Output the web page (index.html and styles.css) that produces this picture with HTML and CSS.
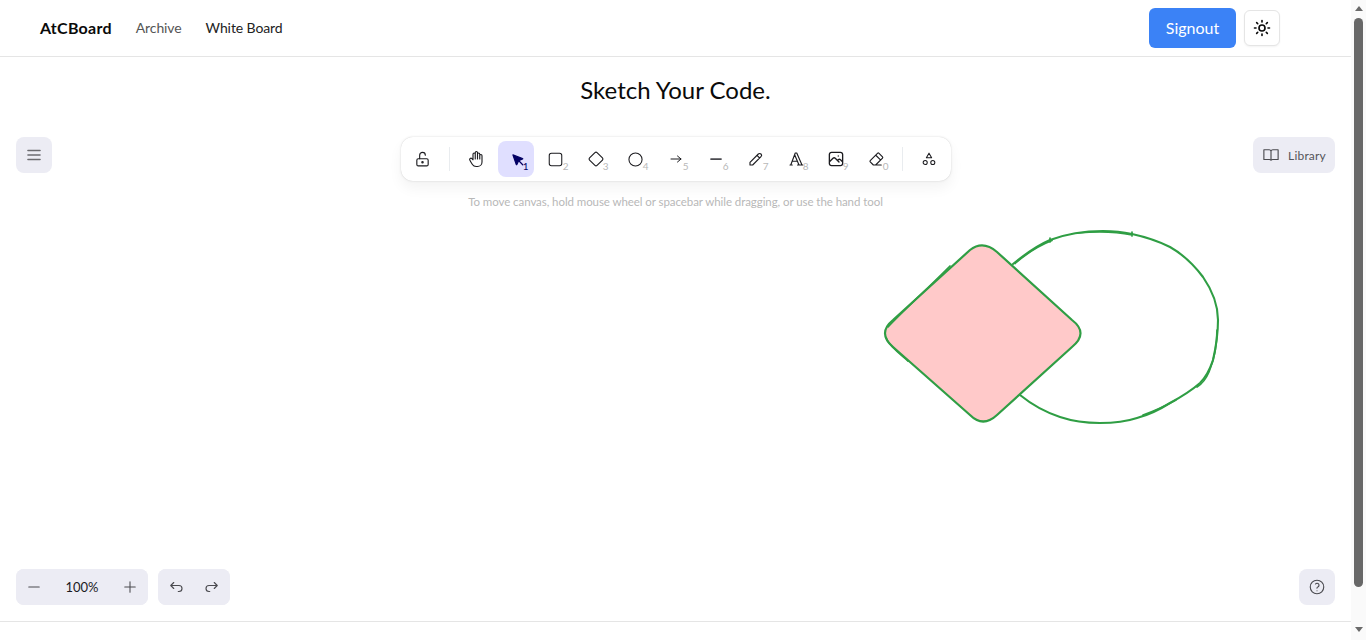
FILE: index.html
```html
<!DOCTYPE html>
<html lang="en">
<head>
<meta charset="utf-8">
<title>AtCBoard</title>
<link rel="stylesheet" href="styles.css">
</head>
<body>
<div class="app">
  <div class="page">
    <header class="header">
      <nav class="nav">
        <a class="logo">AtCBoard</a>
        <a class="link muted">Archive</a>
        <a class="link">White Board</a>
      </nav>
      <div class="actions">
        <button class="signout">Signout</button>
        <button class="theme">
          <svg class="icon18 strong" viewBox="0 0 24 24"><circle cx="12" cy="12" r="4"/><path d="M12 2v2M12 20v2M4.900 4.900l1.400 1.400M17.700 17.700l1.400 1.400M2 12h2M20 12h2M4.900 19.100l1.400-1.400M17.700 6.300l1.400-1.400"/></svg>
        </button>
      </div>
    </header>
    <h1 class="title">Sketch Your Code.</h1>
    <main class="canvas">
      <svg class="drawing" viewBox="0 121 1351 500">
        <path class="ink" d="M1013 264C1024 255 1036 246 1050 240C1066 234 1084 231 1103 231C1113 231 1123 232 1132 234C1146 237 1158 241 1170 247C1184 255 1194 265 1203 277C1212 290 1218 305 1218 320C1218 334 1216 347 1213 360C1210 369 1206 377 1200 383C1191 391 1181 397 1170 403C1159 410 1148 415 1137 418C1125 422 1112 423 1100 423C1086 423 1072 421 1060 417C1045 412 1031 404 1020 395"/>
        <path class="ink thin" d="M1015 263.500C1026 254 1038 246 1052 240.500M1050 238v4M1132 232v4M1132 235C1115 231.500 1095 231.500 1078 233M1217 330C1217 345 1214 360 1209 372C1206 379 1202 384 1197 387M1176 400C1165 406 1155 411 1143 415"/>
        <path class="fill" d="M970 250Q983 240 997 252L1072 320Q1089 333 1072 347L997 415Q983 428 970 415L893 347Q877 333 893 320Z"/>
        <path class="ink thin" d="M888 327C900 314 925 291 950 266M886 338C890 347 900 354 908 361"/>
      </svg>
      <div class="top-row">
        <div class="left"><button class="tile"><svg class="icon18 menu" viewBox="0 0 24 24"><path d="M4 6h16M4 12h16M4 18h16"/></svg></button></div>
        <div class="center">
          <div class="island">
            <button class="tool"><svg class="icon17" viewBox="0 0 24 24"><rect x="4" y="11" width="16" height="10" rx="2"/><circle cx="12" cy="16" r="1"/><path d="M8 11V6a4 4 0 0 1 8 0"/></svg></button>
            <span class="divider"></span>
            <button class="tool"><svg class="icon18" viewBox="0 0 24 24"><path d="M8 13V5.500a1.500 1.500 0 0 1 3 0V12M11 5.500v-2a1.500 1.500 0 1 1 3 0V12M14 5.500a1.500 1.500 0 0 1 3 0V12M17 7.500a1.500 1.500 0 0 1 3 0V16a6 6 0 0 1-6 6h-2 .208a6 6 0 0 1-5.012-2.700l-.196-.300c-.312-.479-1.407-2.388-3.286-5.728a1.500 1.500 0 0 1 .536-2.022 1.867 1.867 0 0 1 2.280.280L8 13"/></svg></button>
            <button class="tool active"><svg class="icon18 pointer" viewBox="0 0 22 22"><path class="solid" d="M6 6l4.150 11.800a.37.37 0 0 0 .660 0l2.190-4.800 4.790-2a.36.36 0 0 0 0-.640L6 6z"/><path d="M13.500 13.500l4.500 4.500"/></svg><span class="key">1</span></button>
            <button class="tool"><svg class="icon15" viewBox="0 0 24 24"><rect x="2" y="2" width="20" height="20" rx="3.500"/></svg><span class="key">2</span></button>
            <button class="tool"><svg class="icon18" viewBox="0 0 24 24"><path d="M10.600 3.400a2 2 0 0 1 2.800 0l7.200 7.200a2 2 0 0 1 0 2.800l-7.200 7.200a2 2 0 0 1-2.800 0l-7.200-7.200a2 2 0 0 1 0-2.800z"/></svg><span class="key">3</span></button>
            <button class="tool"><svg class="icon15" viewBox="0 0 24 24"><circle cx="12" cy="12" r="10.500"/></svg><span class="key">4</span></button>
            <button class="tool"><svg class="icon12" viewBox="0 0 24 24"><path d="M2 12h20M15 6l7 6-7 6"/></svg><span class="key">5</span></button>
            <button class="tool"><svg class="icon12 soft" viewBox="0 0 24 24"><path class="bold" d="M2 12h20"/></svg><span class="key">6</span></button>
            <button class="tool"><svg class="icon16" viewBox="0 0 24 24"><path d="M3 21h4L19.500 8.500a2.800 2.800 0 0 0-4-4L3 17v4M13.500 6.500l4 4"/></svg><span class="key">7</span></button>
            <button class="tool"><svg class="icon18" viewBox="0 0 24 24"><path d="M4 20h3M14 20h7M6.900 15h6.900M10.200 6.300L16 20M5 20l6-16h2l7 16"/></svg><span class="key">8</span></button>
            <button class="tool"><svg class="icon18" viewBox="0 0 20 20"><path d="M12.500 6.670h.010M4.910 2.630h10.180a2.280 2.280 0 0 1 2.280 2.280v10.180a2.280 2.280 0 0 1-2.280 2.280H4.910a2.280 2.280 0 0 1-2.280-2.280V4.910a2.280 2.280 0 0 1 2.280-2.280zM3.330 12.500l3.340-3.330c.770-.750 1.730-.750 2.500 0l4.160 4.160M11.670 11.670l.830-.840c.770-.740 1.730-.740 2.500 0l1.670 1.670"/></svg><span class="key">9</span></button>
            <button class="tool"><svg class="icon18" viewBox="0 0 24 24"><path d="M19 20H8.500l-4.210-4.300a1 1 0 0 1 0-1.410l10-10a1 1 0 0 1 1.410 0l5 5a1 1 0 0 1 0 1.410L11.500 20M18 13.300L11.700 7"/></svg><span class="key">0</span></button>
            <span class="divider"></span>
            <button class="tool"><svg class="icon14" viewBox="0 0 24 24"><path d="M12 2l-4.500 8h9z"/><circle cx="5.500" cy="18" r="3.500"/><circle cx="18.500" cy="18" r="3.500"/></svg></button>
          </div>
          <p class="hint">To move canvas, hold mouse wheel or spacebar while dragging, or use the hand tool</p>
        </div>
        <div class="right">
          <button class="tile library">
            <svg class="icon18 soft" viewBox="0 0 24 24"><path d="M2.500 5h7a2.500 2.500 0 0 1 2.500 2v12a3 3 0 0 0-2.500-1h-7zM21.500 5h-7a2.500 2.500 0 0 0-2.500 2v12a3 3 0 0 1 2.500-1h7z"/></svg>
            <span>Library</span>
          </button>
        </div>
      </div>
      <div class="bottom-row">
        <div class="group-row">
          <div class="group zoom">
            <button class="tile"><svg class="icon14 soft" viewBox="0 0 24 24"><path d="M3 12h18"/></svg></button>
            <span class="percent">100%</span>
            <button class="tile"><svg class="icon14 soft" viewBox="0 0 24 24"><path d="M12 3v18M3 12h18"/></svg></button>
          </div>
          <div class="group">
            <button class="tile"><svg class="icon18 soft" viewBox="0 0 24 24"><path d="M9 14l-4-4 4-4M5 10h11a4 4 0 1 1 0 8h-1"/></svg></button>
            <button class="tile"><svg class="icon18 soft" viewBox="0 0 24 24"><path d="M15 14l4-4-4-4M19 10H8a4 4 0 1 0 0 8h1"/></svg></button>
          </div>
        </div>
        <button class="tile"><svg class="icon18 soft" viewBox="0 0 24 24"><circle cx="12" cy="12" r="9"/><path d="M12 17v.010M12 13.500a1.500 1.500 0 0 1 1-1.500 2.600 2.600 0 1 0-3-4"/></svg></button>
      </div>
    </main>
    <div class="footer"></div>
  </div>
  <aside class="scrollbar">
    <span class="arrow up"></span>
    <span class="thumb"></span>
    <span class="arrow down"></span>
  </aside>
</div>
</body>
</html>
```
FILE: styles.css
```css
* { box-sizing: border-box; }
html, body { margin: 0; height: 100%; overflow: hidden; background: #fff; }
body { font-family: Lato, "Noto Sans", sans-serif; color: #0a0a0a; }
button { font-family: inherit; border: 0; padding: 0; cursor: pointer; }
svg { fill: none; stroke: currentColor; stroke-width: 2; stroke-linecap: round; stroke-linejoin: round; display: block; }

.app { display: flex; height: 640px; }
.page { flex: 1; min-width: 0; display: flex; flex-direction: column; }

.header { height: 57px; flex: none; border-bottom: 1px solid #e5e5e5; display: flex; align-items: center; justify-content: space-between; padding: 0 71px 0 40px; }
.nav { display: flex; align-items: center; gap: 24px; padding-bottom: 2px; }
.logo { font-size: 16px; font-weight: 700; letter-spacing: .25px; color: #0a0a0a; }
.link { font-size: 14px; letter-spacing: -.1px; color: #222; }
.link.muted { color: #555; }
.actions { display: flex; align-items: center; gap: 8px; }
.signout { width: 87px; height: 40px; padding-bottom: 2px; border-radius: 6px; background: #3b82f6; color: #fff; font-size: 16px; }
.theme { width: 36px; height: 36px; border: 1px solid #e5e5e5; border-radius: 6px; background: #fff; display: flex; align-items: center; justify-content: center; box-shadow: 0 1px 2px rgba(0,0,0,.05); color: #0a0a0a; }

.title { height: 64px; flex: none; margin: 0; display: flex; align-items: center; justify-content: center; font-size: 24px; font-weight: 400; color: #0a0a0a; }

.canvas { position: relative; flex: 1; min-height: 0; padding: 16px; display: flex; flex-direction: column; justify-content: space-between; }
.drawing { position: absolute; left: 0; top: 0; width: 1351px; height: 500px; }
.ink { stroke: #2f9e44; stroke-width: 2.100; }
.ink.thin { stroke-width: 1.700; }
.fill { fill: #ffc9c9; stroke: #2f9e44; stroke-width: 2.200; }

.top-row { position: relative; display: grid; grid-template-columns: 1fr auto 1fr; align-items: start; }
.right { display: flex; justify-content: flex-end; }
.center { display: flex; flex-direction: column; align-items: center; }
.island { display: flex; align-items: center; gap: 4px; padding: 4px; background: #fff; border-radius: 12px; box-shadow: 0 0 1px rgba(0,0,0,.17), 0 0 3px rgba(0,0,0,.08), 0 7px 14px rgba(0,0,0,.05); }
.divider { width: 1px; height: 24px; background: #e9ecef; margin: 0 4px; }
.tool { position: relative; width: 36px; height: 36px; border-radius: 8px; background: transparent; display: flex; align-items: center; justify-content: center; color: #1b1b1f; }
.tool.active { background: #e0dfff; color: #030064; }
.key { position: absolute; right: 5px; bottom: 5px; font-size: 10px; line-height: 12px; color: #b8b8b8; }
.active .key { color: #030064; }
.hint { margin: 13px 0 0; font-size: 11.500px; letter-spacing: -.07px; line-height: 16px; color: #b8b8b8; white-space: nowrap; }

.icon12 { width: 12px; height: 12px; stroke-width: 2; }
.icon14 { width: 14px; height: 14px; stroke-width: 1.800; }
.icon15 { width: 15px; height: 15px; stroke-width: 1.700; }
.icon16 { width: 16px; height: 16px; stroke-width: 1.700; }
.icon17 { width: 17px; height: 17px; stroke-width: 1.600; }
.icon18 { width: 18px; height: 18px; stroke-width: 1.500; }
.strong { stroke-width: 2.200; }
.menu { stroke-width: 2.200; color: #6b6b70; }
.pointer { margin-left: 2px; stroke-width: 1.500; }
.solid { fill: currentColor; }
.bold { stroke-width: 3.500; }
.soft { color: #4a4a4f; }

.tile { width: 36px; height: 36px; border-radius: 8px; background: #ececf4; display: flex; align-items: center; justify-content: center; color: #3d3d3d; }
.library { width: 82px; gap: 8px; font-size: 12px; letter-spacing: .2px; color: #55555a; }
.bottom-row { position: relative; display: flex; justify-content: space-between; }
.group-row { display: flex; gap: 10px; }
.group { display: flex; border-radius: 8px; background: #ececf4; }
.percent { width: 60px; display: flex; align-items: center; justify-content: center; font-size: 13px; color: #1b1b1f; }

.footer { height: 19px; flex: none; border-top: 1px solid #e5e5e5; }

.scrollbar { width: 15px; flex: none; background: #fafafa; display: flex; flex-direction: column; align-items: center; }
.arrow { width: 0; height: 0; flex: none; border-left: 4px solid transparent; border-right: 4px solid transparent; }
.up { border-bottom: 5px solid #6a6a6a; margin-top: 6px; margin-bottom: 7px; }
.down { border-top: 5px solid #6a6a6a; margin-top: 40px; }
.thumb { width: 9px; height: 569px; background: #686868; border-radius: 5px; flex: none; }
```
